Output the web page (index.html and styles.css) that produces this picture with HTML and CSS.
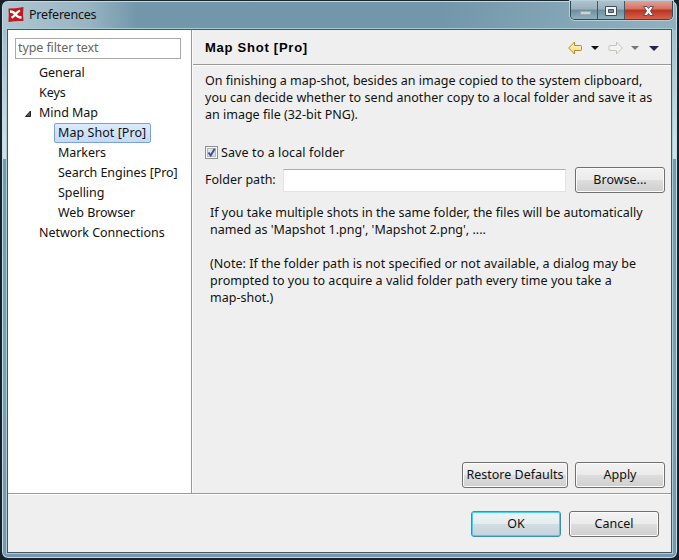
FILE: index.html
```html
<!DOCTYPE html>
<html lang="en">
<head>
<meta charset="utf-8">
<title>Preferences</title>
<link rel="stylesheet" href="styles.css">
</head>
<body>
<div class="window">
  <header class="titlebar">
    <svg class="logo" width="16" height="15" viewBox="0 0 16 15"><path d="M.5 1.500Q8 1.500 15.500 0Q14.500 7 15.500 14Q8 13.500 .5 15Q1 8 .5 1.500Z" fill="#c3171c"/><path d="M2 4.500Q5.500 4.500 7.500 7.300Q9.500 10.300 13.500 10.500M12 3.500Q9.800 4.300 7.500 7.300Q5.500 9.800 3.500 10.800" fill="none" stroke="#fff" stroke-width="2.300"/></svg>
    <h1>Preferences</h1>
    <div class="controls">
      <span class="ctl min"><svg width="27" height="18"><rect x="9.500" y="10.500" width="10" height="3" fill="#c9d4d9" stroke="#9babb3"/></svg></span>
      <span class="ctl max"><svg width="27" height="18"><path d="M7.500 5.500h11v9h-11zM10.500 8.500v3h5v-3z" fill="#f4f4f4" fill-rule="evenodd" stroke="#43505b"/></svg></span>
      <span class="ctl close"><svg width="47" height="18"><path d="M18.500 5.500h3.500l1.500 2 1.500-2h3.500l-3 4.500 3 4.500h-3.500l-1.500-2-1.500 2h-3.500l3-4.500-3-4.500z" fill="#f4f4f4" stroke="#5a5260"/></svg></span>
    </div>
  </header>
  <main class="client">
    <div class="upper">
      <nav class="side">
        <input class="filter" placeholder="type filter text">
        <ul class="tree">
          <li><span>General</span></li>
          <li><span>Keys</span></li>
          <li class="open"><svg class="twist" width="8" height="8"><path d="M6.500 1v5.500h-5z" fill="#555" stroke="#222"/></svg><span>Mind Map</span></li>
          <li class="sub"><span class="selected">Map Shot [Pro]</span></li>
          <li class="sub"><span>Markers</span></li>
          <li class="sub"><span>Search Engines [Pro]</span></li>
          <li class="sub"><span>Spelling</span></li>
          <li class="sub"><span>Web Browser</span></li>
          <li><span>Network Connections</span></li>
        </ul>
      </nav>
      <section class="page">
        <div class="heading">
          <h2>Map Shot [Pro]</h2>
          <svg width="94" height="14" viewBox="0 0 94 14">
            <defs><linearGradient id="gold" x2="0" y2="1"><stop stop-color="#fffbe0"/><stop offset="1" stop-color="#f8d568"/></linearGradient></defs>
            <path d="M.7 7L6.500 1V4.500H12.500Q13.500 4.500 13.500 5.500V8.500Q13.500 9.500 12.500 9.500H6.500V13Z" fill="url(#gold)" stroke="#b98622"/>
            <path d="M23 5h8l-4 4z" fill="#111"/>
            <path d="M54.300 7L48.500 1V4.500H42Q41 4.500 41 5.500V8.500Q41 9.500 42 9.500H48.500V13Z" fill="#f3f3f1" stroke="#c3c3be"/>
            <path d="M63 5h8l-4 4z" fill="#777"/>
            <path d="M81 5h10l-5 5z" fill="#26264c"/>
          </svg>
        </div>
        <div class="body">
          <p class="intro">On finishing a map-shot, besides an image copied to the system clipboard,<br><span class="loose">you can decide whether to send another copy to a local folder and save it as</span><br>an image file (32-bit PNG).</p>
          <div class="check"><svg width="13" height="13"><rect x=".5" y=".5" width="12" height="12" fill="#f8f8f8" stroke="#8e8f8f"/><rect x="2.500" y="2.500" width="8" height="8" fill="#dfe3e8" stroke="#b5bac1"/><path d="M3.500 6.500L5.700 9.500L9.700 2.800" fill="none" stroke="#42528f" stroke-width="2"/></svg><span>Save to a local folder</span></div>
          <div class="path"><label>Folder path:</label><input class="field"><button>Browse...</button></div>
          <p class="note">If you take multiple shots in the same folder, the files will be automatically<br>named as 'Mapshot 1.png', 'Mapshot 2.png', ....<br><br><span class="loose">(Note: If the folder path is not specified or not available, a dialog may be<br>prompted to you to acquire a valid folder path every time you take a</span><br>map-shot.)</p>
          <div class="actions"><button class="wide">Restore Defaults</button><button>Apply</button></div>
        </div>
      </section>
    </div>
    <footer class="footer"><button class="primary">OK</button><button>Cancel</button></footer>
  </main>
</div>
</body>
</html>
```
FILE: styles.css
```css
* { box-sizing: border-box; }
body { margin: 0; padding-left: 1px; background: #172029; font: 12.5px/17px "Noto Sans", sans-serif; color: #111; overflow: hidden; }
h1, h2, p, ul { margin: 0; padding: 0; }
.window {
  width: 677px; height: 559px; padding: 0 4px 5px;
  border: 1px solid #1b252d; border-radius: 7px; box-shadow: inset 0 0 0 1px #bfdbe5;
  background:
    linear-gradient(90deg, rgba(196,214,222,.75) 0, rgba(190,210,220,.5) 85px, transparent 135px) 0 0 / 100% 29px no-repeat,
    linear-gradient(90deg, transparent 440px, rgba(180,205,215,.45) 660px) 0 0 / 100% 29px no-repeat,
    linear-gradient(#a5bcc9, #d2dde5 85%, #d2dde5) 0 29px / 100% 129px no-repeat,
    linear-gradient(#7297aa, #7ba0af 70%, #7897ae);
}
.titlebar { height: 28px; display: flex; }
.logo { margin: 6px 0 0 2px; }
h1 { font-size: 12.5px; font-weight: 400; line-height: 17px; margin: 5px 0 0 5px; letter-spacing: -.2px; }
.controls { display: flex; height: 19px; margin: 0 0 0 auto; border: 1px solid #344650; border-top: 0; border-radius: 0 0 5px 5px; box-shadow: 0 0 0 1px #b9d0da; overflow: hidden; width: 103px; }
.ctl { height: 18px; background: linear-gradient(#afc2cb, #98b0bb 45%, #6f8e9d 50%, #8fb2bf); border-right: 1px solid #415965; }
.ctl svg { display: block; }
.min { width: 27px; }
.max { width: 27px; }
.close { width: 47px; border: 0; background: linear-gradient(#e3a294, #d4705f 45%, #b83220 50%, #d8624a); }
.client { width: 665px; height: 524px; border: 1px solid #43575f; outline: 1px solid #a9cbd3; background: #efefef; margin-left: 1px; display: flex; flex-direction: column; }
.upper { height: 464px; display: flex; border-bottom: 1px solid #999; }
.side { width: 184px; background: #fff; border-right: 1px solid #999; padding: 8px 0 0 7px; }
.filter { display: block; width: 166px; height: 21px; padding: 0 2px 2px; border: 1px solid #a8a8a8; font: inherit; letter-spacing: -.1px; outline: 0; }
.filter::placeholder { color: #666; opacity: 1; }
.tree { list-style: none; padding: 4px 0 0 24px; line-height: 20px; letter-spacing: -.05px; }
.tree li { height: 20px; position: relative; white-space: nowrap; }
.tree .sub { padding-left: 19px; }
.twist { position: absolute; left: -15px; top: 7px; }
.selected { display: block; width: 97px; height: 20px; line-height: 18px; margin-left: -4px; padding-left: 3px; border: 1px solid #7da2ce; border-radius: 2px; background: linear-gradient(#dcebfc, #c1dbfc); letter-spacing: .05px; }
.page { width: 479px; display: flex; flex-direction: column; border-left: 1px solid #fafafa; }
.heading { height: 35px; border-bottom: 1px solid #999; display: flex; justify-content: space-between; padding: 10px 9px 0 12px; box-shadow: 0 1px #fff; }
.heading svg { margin-top: 1px; }
h2 { font: bold 13px/16px "Liberation Sans", sans-serif; color: #000; letter-spacing: .75px; }
.body { flex: 1; padding: 7px 6px 5px 12px; display: flex; flex-direction: column; white-space: nowrap; }
.loose { letter-spacing: .04px; }
.check { display: flex; align-items: center; gap: 3px; height: 17px; margin-top: 21px; letter-spacing: .1px; }
.path { display: flex; align-items: center; margin-top: 6px; height: 26px; }
.path label { width: 78px; margin-top: -2px; }
.field { width: 283px; height: 23px; border: 1px solid #e2e3ea; border-top-color: #abadb3; margin-right: 9px; background: #fff; padding: 0; }
.note { margin: 11px 0 0 5px; }
button { width: 90px; height: 26px; padding: 0 0 1px; border: 1px solid #707070; border-radius: 3px; box-shadow: inset 0 0 0 1px #fbfbfb; background: linear-gradient(#f2f2f2, #ebebeb 49%, #dddddd 50%, #cfcfcf); font: inherit; color: #111; white-space: nowrap; }
.actions { display: flex; justify-content: flex-end; gap: 7px; margin-top: auto; }
.wide { width: 106px; }
.footer { height: 58px; border-top: 1px solid #fff; display: flex; justify-content: flex-end; gap: 8px; padding: 16px 12px 0 0; }
.primary { border-color: #3c8fb8; box-shadow: inset 0 0 0 1px #48d0f7; background: linear-gradient(#eef4f7, #e4edf1 49%, #d2dde3 50%, #c5d3db); }
```
